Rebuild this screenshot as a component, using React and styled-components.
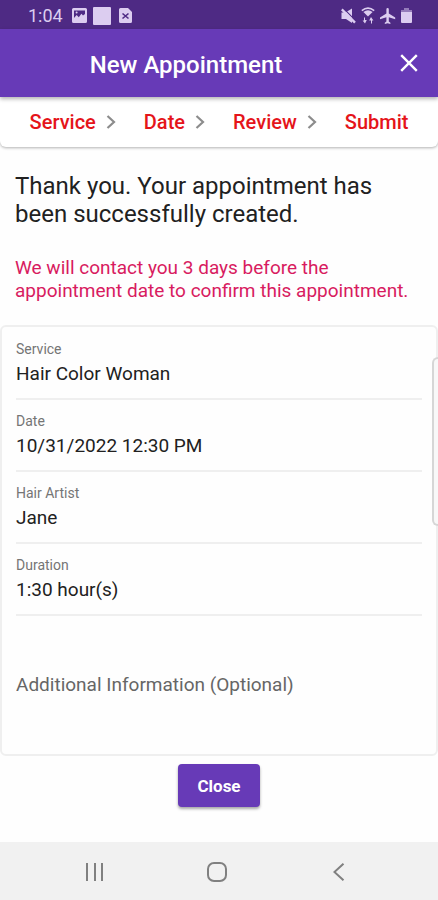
import { useState } from "react";
import styled, { createGlobalStyle } from "styled-components";

const GlobalStyle = createGlobalStyle`
  * {
    box-sizing: border-box;
  }

  body {
    margin: 0;
    background: #fefefe;
    font-family: Roboto, "Liberation Sans", sans-serif;
    color: #212121;
  }
`;

const Screen = styled.div`
  display: flex;
  flex-direction: column;
  min-height: 100vh;
`;

const StatusBar = styled.div`
  display: flex;
  align-items: center;
  justify-content: space-between;
  height: 29px;
  padding: 2px 26px 0 28px;
  background: #4e2a84;
  color: #dccdf0;
`;

const StatusGroup = styled.div`
  display: flex;
  align-items: center;
  gap: ${({ $gap }) => $gap};
`;

const Clock = styled.span`
  margin-right: 3px;
  font-size: 18px;
  line-height: 24px;
`;

const AppBar = styled.header`
  position: relative;
  display: flex;
  align-items: center;
  height: 68px;
  background: #673ab7;
  color: #fff;
  box-shadow: 0 2px 4px rgba(0, 0, 0, 0.3);
`;

const Title = styled.h1`
  flex: 1;
  margin: 0;
  padding: 4px 8px 0 0;
  font-size: 24px;
  font-weight: 500;
  line-height: 32px;
  text-align: center;
`;

const IconButton = styled.button`
  display: flex;
  align-items: center;
  justify-content: center;
  width: ${({ $width }) => $width};
  height: 48px;
  padding: 0;
  border: none;
  background: none;
  color: inherit;
  cursor: pointer;
`;

const Steps = styled.ol`
  display: flex;
  align-items: center;
  justify-content: center;
  gap: 28px;
  height: 50px;
  margin: 0;
  padding: 0;
  border-radius: 0 0 6px 6px;
  background: #fff;
  box-shadow: 0 1px 3px rgba(0, 0, 0, 0.3);
  list-style: none;
`;

const Step = styled.li`
  display: flex;
  align-items: center;
  gap: 10px;
  color: #e5141a;
  font-size: 20px;
  font-weight: 500;
  line-height: 24px;
`;

const Content = styled.main`
  display: flex;
  flex: 1;
  flex-direction: column;
`;

const Messages = styled.section`
  padding: 25px 15px 23px;
`;

const Headline = styled.h2`
  margin: 0 0 28px;
  font-size: 24px;
  font-weight: 400;
  line-height: 28px;
`;

const Notice = styled.p`
  margin: 0;
  color: #d81b60;
  font-size: 19px;
  line-height: 23px;
`;

const Card = styled.form`
  padding: 1px 14px 0;
  border: 2px solid #efefef;
  border-radius: 6px;
`;

const Field = styled.div`
  display: flex;
  flex-direction: column;
  height: 72px;
  padding-top: 11px;
  border-bottom: 2px solid #efefef;
`;

const Label = styled.label`
  color: #757575;
  font-size: 14px;
  line-height: 20px;
`;

const Value = styled.input`
  width: 100%;
  height: 28px;
  padding: 0;
  border: none;
  outline: none;
  background: none;
  color: #212121;
  font-family: inherit;
  font-size: 19px;
`;

const Notes = styled.textarea`
  display: block;
  width: 100%;
  height: 138px;
  padding: 57px 0;
  border: none;
  outline: none;
  background: none;
  color: #212121;
  font-family: inherit;
  font-size: 19px;
  line-height: 24px;
  resize: none;

  &::placeholder {
    color: #666;
    opacity: 1;
  }
`;

const Actions = styled.div`
  display: flex;
  justify-content: center;
  padding: 8px 16px 34px;
`;

const CloseButton = styled.button`
  height: 43px;
  padding: 0 19px;
  border: none;
  border-radius: 4px;
  background: #673ab7;
  box-shadow: 0 2px 3px rgba(0, 0, 0, 0.35);
  color: #fff;
  font-family: inherit;
  font-size: 17px;
  font-weight: 700;
  cursor: pointer;
`;

// Handle of the edge panel that sticks out at the right of the screen
const EdgeHandle = styled.div`
  position: fixed;
  top: 357px;
  right: 0;
  width: 6px;
  height: 169px;
  border: 2px solid #d6d6d6;
  border-right: none;
  border-radius: 6px 0 0 6px;
  background: #f8f8f8;
`;

const NavBar = styled.nav`
  display: flex;
  align-items: center;
  justify-content: center;
  gap: 74px;
  height: 58px;
  padding: 2px 4px 0 0;
  background: #f1f1f1;
  color: #808080;
`;

const steps = ["Service", "Date", "Review", "Submit"];

const details = [
  { id: "service", label: "Service", value: "Hair Color Woman" },
  { id: "date", label: "Date", value: "10/31/2022 12:30 PM" },
  { id: "artist", label: "Hair Artist", value: "Jane" },
  { id: "duration", label: "Duration", value: "1:30 hour(s)" },
];

const PictureIcon = () => (
  <svg width="15" height="15" viewBox="0 0 15 15" aria-hidden="true">
    <path
      fill="currentColor"
      fillRule="evenodd"
      d="M1.5 0h12A1.5 1.5 0 0 1 15 1.5v12a1.5 1.5 0 0 1-1.5 1.5h-12A1.5 1.5 0 0 1 0 13.5v-12A1.5 1.5 0 0 1 1.5 0zM2 2.5v7.5l2.6-3 2.2 2.2 2.6-3.4 1.6 1.6L13 6V2.5z"
    />
    <circle cx="4.6" cy="4.6" r="1" fill="currentColor" />
  </svg>
);

const SquareIcon = () => (
  <svg width="18" height="18" viewBox="0 0 18 18" aria-hidden="true">
    <rect width="18" height="18" rx="1" fill="currentColor" />
  </svg>
);

const FileErrorIcon = () => (
  <svg width="17" height="15" viewBox="-2 0 17 15" aria-hidden="true">
    <path fill="currentColor" d="M1.5 0H9l4 4v9.5a1.5 1.5 0 0 1-1.5 1.5h-10A1.5 1.5 0 0 1 0 13.5v-12A1.5 1.5 0 0 1 1.5 0z" />
    <path stroke="#4e2a84" strokeWidth="1.6" d="M3.5 5.5l6 5M9.5 5.5l-6 5" />
  </svg>
);

const MuteIcon = () => (
  <svg width="15" height="16" viewBox="0 0 15 16" aria-hidden="true">
    <path fill="currentColor" d="M0.5 4.5h4L11 0.5v14.5L5 11H0.5z" />
    <path stroke="#4e2a84" strokeWidth="1.2" d="M2.4 0.4l12.6 12.6" />
    <path stroke="currentColor" strokeWidth="2.4" d="M0.8 1.4l13.2 13.2" />
  </svg>
);

const WifiIcon = () => (
  <svg width="14" height="17" viewBox="0 0 14 17" aria-hidden="true">
    <path fill="none" stroke="currentColor" strokeWidth="1.6" d="M0.8 3.6Q7-1.4 13.2 3.6" />
    <path fill="currentColor" d="M2.4 5Q7 1.6 11.6 5L7 9.6z" />
    <path fill="currentColor" d="M4 10.4v2.6h1.8L4 16.6 1.6 13.4H3v-3zM10 16.6v-3H8.2L10 10l2.4 3.4H11v3.2z" />
  </svg>
);

const PlaneIcon = () => (
  <svg width="16" height="16" viewBox="2 2 20 20" aria-hidden="true">
    <path
      fill="currentColor"
      d="M21 16v-2l-8-5V3.5a1.5 1.5 0 0 0-3 0V9l-8 5v2l8-2.5V19l-2 1.5V22l3.5-1 3.5 1v-1.5L13 19v-5.5z"
    />
  </svg>
);

const BatteryIcon = () => (
  <svg width="11" height="15" viewBox="0 0 11 15" aria-hidden="true">
    <path fill="currentColor" opacity="0.5" d="M3 0h5v2h3v3H0V2h3z" />
    <path fill="currentColor" d="M0 4h11v10a1 1 0 0 1-1 1H1a1 1 0 0 1-1-1z" />
  </svg>
);

const CrossIcon = () => (
  <svg width="18" height="18" viewBox="0 0 18 18" aria-hidden="true">
    <path stroke="currentColor" strokeWidth="2.4" d="M1.2 1.2l15.6 15.6M16.8 1.2L1.2 16.8" />
  </svg>
);

const ChevronIcon = () => (
  <svg width="10" height="14" viewBox="0 0 10 14" aria-hidden="true">
    <path fill="none" stroke="#8c8c8c" strokeWidth="2.2" d="M1.5 1l6.5 6-6.5 6" />
  </svg>
);

const RecentsIcon = () => (
  <svg width="20" height="18" viewBox="0 0 20 18" aria-hidden="true">
    <path stroke="currentColor" strokeWidth="2" d="M2 0v18M10 0v18M17 0v18" />
  </svg>
);

const HomeIcon = () => (
  <svg width="20" height="20" viewBox="0 0 20 20" aria-hidden="true">
    <rect x="1" y="1" width="18" height="18" rx="6" fill="none" stroke="currentColor" strokeWidth="2" />
  </svg>
);

const BackIcon = () => (
  <svg width="12" height="18" viewBox="0 0 12 18" aria-hidden="true">
    <path fill="none" stroke="currentColor" strokeWidth="2" d="M10.5 0.7L1.4 9l9.1 8.3" />
  </svg>
);

const App = () => {
  const [notes, setNotes] = useState("");

  return (
    <Screen>
      <GlobalStyle />

      <StatusBar>
        <StatusGroup $gap="6px">
          <Clock>1:04</Clock>
          <PictureIcon />
          <SquareIcon />
          <FileErrorIcon />
        </StatusGroup>
        <StatusGroup $gap="5px">
          <MuteIcon />
          <WifiIcon />
          <PlaneIcon />
          <BatteryIcon />
        </StatusGroup>
      </StatusBar>

      <AppBar>
        <Title>New Appointment</Title>
        <IconButton type="button" aria-label="Close" $width="58px">
          <CrossIcon />
        </IconButton>
      </AppBar>

      <Steps>
        {steps.map((step, index) => (
          <Step key={step}>
            {step}
            {index < steps.length - 1 && <ChevronIcon />}
          </Step>
        ))}
      </Steps>

      <Content>
        <Messages>
          <Headline>Thank you. Your appointment has been successfully created.</Headline>
          <Notice>We will contact you 3 days before the appointment date to confirm this appointment.</Notice>
        </Messages>

        <Card>
          {details.map(({ id, label, value }) => (
            <Field key={id}>
              <Label htmlFor={id}>{label}</Label>
              <Value id={id} type="text" value={value} readOnly />
            </Field>
          ))}
          <Notes
            aria-label="Additional Information (Optional)"
            placeholder="Additional Information (Optional)"
            value={notes}
            onChange={(e) => setNotes(e.target.value)}
          />
        </Card>

        <Actions>
          <CloseButton type="button">Close</CloseButton>
        </Actions>
      </Content>

      <EdgeHandle />

      <NavBar>
        <IconButton type="button" aria-label="Recent apps" $width="48px">
          <RecentsIcon />
        </IconButton>
        <IconButton type="button" aria-label="Home" $width="48px">
          <HomeIcon />
        </IconButton>
        <IconButton type="button" aria-label="Back" $width="48px">
          <BackIcon />
        </IconButton>
      </NavBar>
    </Screen>
  );
};

export default App;
